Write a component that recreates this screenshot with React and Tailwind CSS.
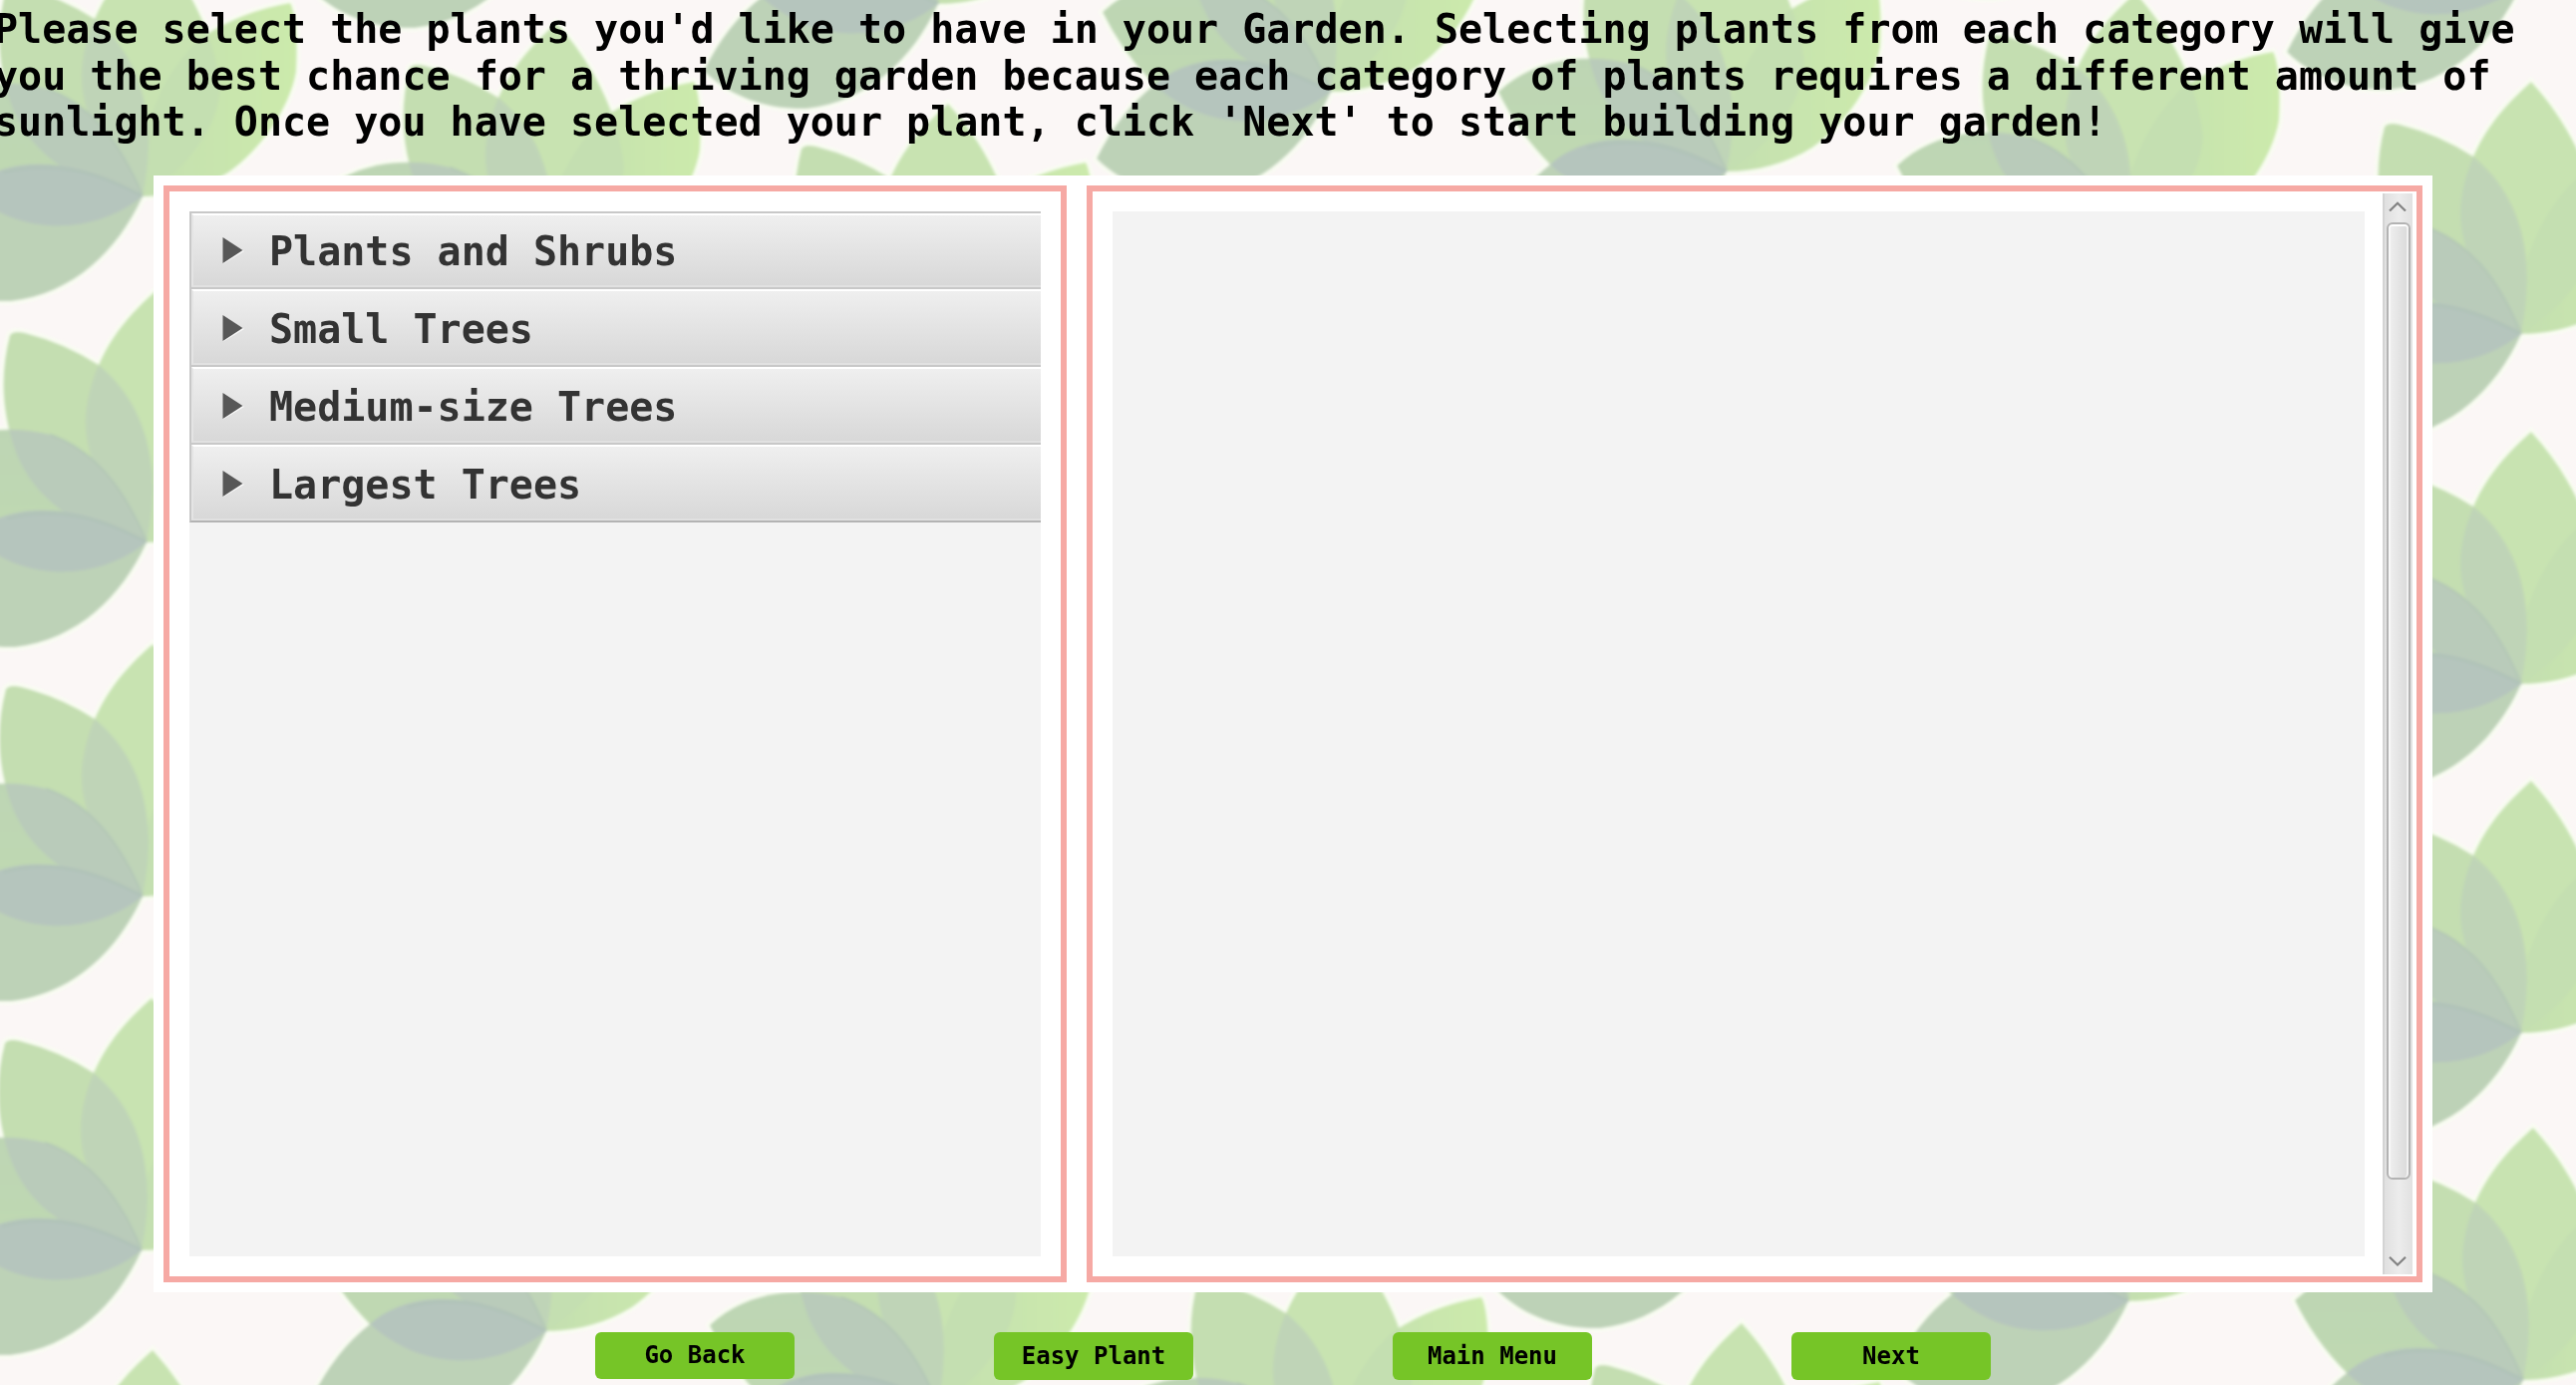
import React from "react";

const MONO = "font-['DejaVu_Sans_Mono',monospace]";

const PETALS = {
  right: "M0 0 C-10 -60 20 -125 60 -160 Q100 -186 148 -194 C153 -186 156 -160 154 -125 C148 -90 120 -48 86 -24 C60 -8 30 0 0 0 Z",
  middle: "M0 0 C-45 -45 -66 -95 -60 -135 C-52 -190 -22 -225 10 -253 C45 -215 72 -165 78 -110 C76 -65 40 -25 0 0 Z",
  left: "M0 0 C-75 -14 -112 -45 -130 -88 C-146 -130 -147 -170 -137 -208 Q-133 -213 -122 -210 Q-82 -200 -48 -178 C-8 -145 18 -90 0 0 Z",
  upper: "M0 0 C-45 36 -120 45 -177 -7 Q-210 -40 -229 -80 C-195 -112 -145 -120 -97 -108 C-50 -92 -20 -50 0 0 Z",
  lower: "M0 0 C-60 -38 -135 -45 -177 -7 Q-212 20 -235 67 C-205 97 -165 106 -132 105 C-70 98 -25 55 0 0 Z",
};

const FLOWERS = [
  [143, 197], [147, 544], [143, 899], [142, 1254], [143, 1607],
  [548, -77], [548, 276], [548, 629], [548, 982], [548, 1335],
  [941, 4], [941, 357], [941, 1056], [941, 1409],
  [1335, 92], [1337, 443], [1338, 1142], [1338, 1495],
  [1732, 172], [1737, 1227], [1737, 1580],
  [2132, -107], [2132, 246], [2135, 952], [2135, 1305],
  [2529, -15], [2529, 335], [2529, 686], [2529, 1036], [2531, 1384],
];

function LeafPattern() {
  return (
    <svg className="absolute left-0 top-0 h-[1389px] w-[2584px]" viewBox="0 0 2584 1389" aria-hidden="true">
      <defs>
        {Object.entries(PETALS).map(([name, d]) => (
          <clipPath id={"clip-" + name} key={name}>
            <path d={d} />
          </clipPath>
        ))}
        <linearGradient id="fillRight" x1="0" x2="1"><stop offset="0" stopColor="#c4dfb0" /><stop offset="1" stopColor="#cceaab" /></linearGradient>
        <linearGradient id="fillUpper" x1="0" y1="0" x2="0" y2="1"><stop offset="0" stopColor="#bdd5b4" /><stop offset="1" stopColor="#c0dab0" /></linearGradient>
        <g id="flower">
          <g fill="none" stroke="#f9fdf2" strokeWidth="7">
            {Object.entries(PETALS).map(([name, d]) => <path d={d} key={name} />)}
          </g>
          <path d={PETALS.right} fill="url(#fillRight)" />
          <path d={PETALS.middle} fill="#c8e3b1" />
          <path d={PETALS.middle} fill="#c4dfb1" clipPath="url(#clip-right)" />
          <path d={PETALS.left} fill="#c4deb1" />
          <path d={PETALS.left} fill="#bfd4b7" clipPath="url(#clip-middle)" />
          <path d={PETALS.lower} fill="#bdd2b7" />
          <path d={PETALS.upper} fill="url(#fillUpper)" />
          <path d={PETALS.upper} fill="#b9cbba" clipPath="url(#clip-left)" />
          <path d={PETALS.upper} fill="#b5c5bd" clipPath="url(#clip-lower)" />
          <path d="M-140 -24 C-90 -38 -45 -24 0 0" fill="none" stroke="#b0c2b8" strokeWidth="3" />
          <path d="M-97 -108 C-50 -92 -20 -50 0 0" fill="none" stroke="#b3c7b5" strokeWidth="2" />
        </g>
        <filter id="soften" x="0" y="0" width="100%" height="100%">
          <feGaussianBlur stdDeviation="1.5" />
        </filter>
      </defs>
      <rect width="2584" height="1389" fill="#fbf7f6" />
      <g filter="url(#soften)">
        {FLOWERS.map(([x, y]) => (
          <use href="#flower" key={x + "-" + y} transform={`translate(${x} ${y})`} />
        ))}
      </g>
    </svg>
  );
}

function AccordionRow({ label, first, last }) {
  return (
    <div
      className={
        "flex border-b-2 border-l-2 border-l-[#c8c8c8] h-[78px] " +
        (first ? "border-t-2 border-t-[#c8c8c8] " : "") +
        (last ? "border-b-[#b3b3b3]" : "border-b-[#c8c8c8]")
      }
    >
      <div className="flex min-w-0 flex-1 items-end border-b-2 border-l-2 border-t-2 border-b-[#e1e1e1] border-l-[#e4e4e4] border-t-white bg-linear-to-b from-[#efefef] to-[#d8d8d8] pl-[29px]">
        <svg className="mb-[21px] h-[28px] w-[22px]" viewBox="0 0 22 28">
          <path d="M1 2.5 L22 15 L1 27.5 Z" fill="#fafafa" />
          <path d="M0.5 1 L20.5 14 L0.5 27 Z" fill="#575757" />
        </svg>
        <span className="mb-[11px] ml-[25px] whitespace-pre text-[40px] font-bold leading-[46px] text-[#333333]">{label}</span>
      </div>
    </div>
  );
}

function Scrollbar() {
  return (
    <div className="flex h-[1084px] w-[30px] flex-col items-center border-l-2 border-[#d4d4d4] bg-linear-to-r from-[#e0e0e0] via-[#ececec] to-[#e1e1e1]">
      <svg className="mr-[2px] mt-2 h-[10px] w-[18px] shrink-0" viewBox="0 0 18 10">
        <path d="M1 9.5 L9 1.7 L17 9.5" fill="none" stroke="#838383" strokeWidth="2.2" />
      </svg>
      <div className="mt-[11px] h-[960px] w-[24px] rounded-[6px] border-2 border-[#b3b3b3] bg-linear-to-r from-[#f0f0f0] to-[#d9d9d9] shadow-[inset_0_2px_0_#ffffff,inset_2px_0_0_#f8f8f8,inset_-2px_0_0_#f2f2f2]" />
      <svg className="mb-2 mr-[2px] mt-auto h-[10px] w-[18px] shrink-0" viewBox="0 0 18 10">
        <path d="M1 0.8 L9 8.5 L17 0.8" fill="none" stroke="#838383" strokeWidth="2.2" />
      </svg>
    </div>
  );
}

const CATEGORIES = ["Plants and Shrubs", "Small Trees", "Medium-size Trees", "Largest Trees"];
const ACTIONS = ["Go Back", "Easy Plant", "Main Menu", "Next"];

export default function App() {
  return (
    <div className={"relative h-[1390px] w-[2584px] overflow-hidden bg-white " + MONO}>
      <LeafPattern />
      <div className="relative flex h-full flex-col">
        <header className="h-[176px] pt-[6px]">
          <h1 className="-ml-[6px] whitespace-pre text-[40px] font-bold leading-[46.5px] text-black">
            {"Please select the plants you'd like to have in your Garden. Selecting plants from each category will give\nyou the best chance for a thriving garden because each category of plants requires a different amount of\nsunlight. Once you have selected your plant, click 'Next' to start building your garden!"}
          </h1>
        </header>

        <main className="ml-[154px] flex h-[1120px] w-[2286px] gap-5 bg-white p-[10px]">
          <section className="w-[906px] border-[6px] border-[#f6a9a4] p-5">
            <div className="h-full bg-[#f3f3f3]">
              {CATEGORIES.map((label, i) => (
                <AccordionRow key={label} label={label} first={i === 0} last={i === CATEGORIES.length - 1} />
              ))}
            </div>
          </section>
          <section className="flex flex-1 border-[6px] border-[#f6a9a4] py-[2px] pl-5 pr-1">
            <div className="my-[18px] flex-1 bg-[#f3f3f3]" />
            <div className="ml-[18px]">
              <Scrollbar />
            </div>
          </section>
        </main>

        <footer className="ml-[597px] mt-10 flex gap-[200px]">
          {ACTIONS.map((label, i) => (
            <button
              key={label}
              className={
                "w-[200px] rounded-[6px] bg-[#76c527] text-center text-[24px] font-bold leading-[46px] text-black " +
                (i === 0 ? "-mt-[0.5px] h-[47px]" : "h-[48px]")
              }
            >
              {label}
            </button>
          ))}
        </footer>
      </div>
    </div>
  );
}
